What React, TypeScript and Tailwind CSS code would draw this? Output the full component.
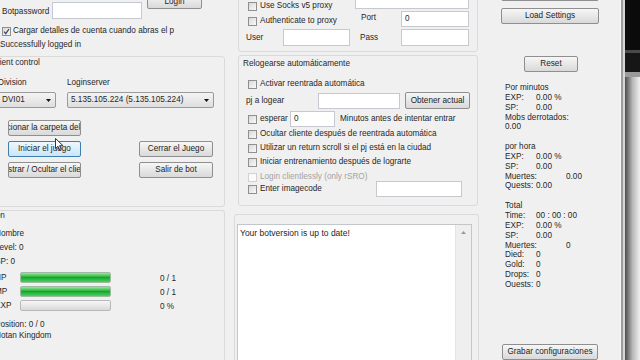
import type { ReactNode } from 'react';

type BoxProps = { className?: string; children?: ReactNode };

function Btn({ className = '', hover = false, children }: BoxProps & { hover?: boolean }) {
  const skin = hover
    ? 'border-[#3c7fb1] bg-gradient-to-b from-[#eef7fd] to-[#c9e6f8]'
    : 'border-[#8f8f8f] bg-gradient-to-b from-[#f6f6f6] to-[#d9d9d9]';
  return (
    <div
      className={`flex shrink-0 items-center justify-center overflow-hidden whitespace-nowrap rounded-[2px] border text-[#1d1d1d] ${skin} ${className}`}
    >
      {children}
    </div>
  );
}

function Field({ className = '', children }: BoxProps) {
  return (
    <div className={`flex shrink-0 items-center border border-[#c6cad0] bg-white pl-[3px] ${className}`}>
      {children}
    </div>
  );
}

function Combo({ className = '', children }: BoxProps) {
  return (
    <div
      className={`relative flex h-[16px] shrink-0 items-center rounded-[2px] border border-[#9a9a9a] bg-gradient-to-b from-[#f4f4f4] to-[#dedede] pl-[3px] whitespace-nowrap ${className}`}
    >
      {children}
      {/* dropdown arrow */}
      <svg className="absolute right-[4px] top-[6px]" width="5" height="3" viewBox="0 0 5 3">
        <path d="M0 0H5L2.5 3Z" fill="#111" />
      </svg>
    </div>
  );
}

function Check({ checked = false, disabled = false }: { checked?: boolean; disabled?: boolean }) {
  return (
    <span
      className={`relative block h-[9px] w-[9px] shrink-0 border ${
        disabled ? 'border-[#d2d2d2] bg-[#fbfbfb]' : 'border-[#8e8f8f] bg-gradient-to-br from-[#d9d9d9] to-[#f9f9f9]'
      }`}
    >
      {checked && (
        <svg className="absolute left-0 top-0" width="7" height="7" viewBox="0 0 7 7">
          <path d="M1 3.6L2.8 5.6L6 1" fill="none" stroke="#3b4a63" strokeWidth="1.3" />
        </svg>
      )}
    </span>
  );
}

function Cursor() {
  return (
    <svg className="absolute left-[47px] top-[-3px]" width="9" height="13" viewBox="0 0 9 13">
      <path d="M0.5 0.5V10.5L3 8.3L4.8 12.2L6.3 11.5L4.6 7.7H8Z" fill="#fff" stroke="#222" strokeWidth="0.9" />
    </svg>
  );
}

function LeftColumn() {
  return (
    <div className="flex w-[232px] shrink-0 flex-col">
      <div className="flex h-[21px] shrink-0 items-start">
        <span className="w-[52px] shrink-0 pl-[2px] pt-[7px]">Botpassword</span>
        <Field className="mt-[2px] h-[17px] w-[90px]" />
        <Btn className="ml-[5px] mt-[-6px] h-[15px] w-[55px]">Login</Btn>
      </div>
      <div className="mt-[5px] flex h-[10px] shrink-0 items-center gap-[2px] pl-[2px]">
        <Check checked />
        <span className="whitespace-nowrap">Cargar detalles de cuenta cuando abras el p</span>
      </div>
      <div className="mt-[4px] h-[10px] shrink-0 whitespace-nowrap">Successfully logged in</div>

      {/* Client control */}
      <div className="-ml-[12px] mt-[6px] flex h-[151px] w-[237px] shrink-0 flex-col rounded-[3px] border border-[#dadada]">
        <div className="mt-[1px] h-[10px] pl-[3px] whitespace-nowrap">Client control</div>
        <div className="flex flex-col pl-[9px]">
          <div className="mt-[10px] flex h-[10px]">
            <span className="w-[69px] shrink-0">Division</span>
            <span>Loginserver</span>
          </div>
          <div className="mt-[4px] flex">
            <Combo className="w-[58px]">DVI01</Combo>
            <Combo className="ml-[11px] w-[147px]">5.135.105.224 (5.135.105.224)</Combo>
          </div>
          <div className="mt-[12px] flex">
            <div className="ml-[10px] flex w-[73px] flex-col gap-[5px]">
              <Btn className="h-[16px]">Seleccionar la carpeta del juego</Btn>
              <div className="relative">
                <Btn hover className="h-[16px]">Iniciar el juego</Btn>
                <Cursor />
              </div>
              <Btn className="h-[16px]">Mostrar / Ocultar el cliente</Btn>
            </div>
            <div className="ml-[58px] flex w-[74px] flex-col gap-[5px] pt-[21px]">
              <Btn className="h-[16px]">Cerrar el Juego</Btn>
              <Btn className="h-[16px]">Salir de bot</Btn>
            </div>
          </div>
        </div>
      </div>

      {/* Character info */}
      <div className="-ml-[12px] mt-[3px] flex h-[160px] w-[237px] shrink-0 flex-col rounded-t-[3px] border border-b-0 border-[#dadada] pl-[6px]">
        <div className="-ml-[33px] h-[10px] whitespace-nowrap">Información</div>
        <div className="mt-[8px] h-[10px]">Nombre</div>
        <div className="mt-[4px] h-[10px]">Level: 0</div>
        <div className="mt-[4px] h-[10px]">SP: 0</div>
        <StatBar label="HP" value="0 / 1" full className="mt-[5px]" />
        <StatBar label="MP" value="0 / 1" full className="mt-[3px]" />
        <StatBar label="EXP" value="0 %" className="mt-[3px]" />
        <div className="mt-[9px] h-[10px] whitespace-nowrap">Position: 0 / 0</div>
        <div className="mt-[1px] h-[10px] whitespace-nowrap">Hotan Kingdom</div>
      </div>
    </div>
  );
}

function StatBar({ label, value, full = false, className = '' }: { label: string; value: string; full?: boolean; className?: string }) {
  return (
    <div className={`flex h-[11px] shrink-0 items-center ${className}`}>
      <span className="w-[25px] shrink-0">{label}</span>
      <div
        className={`h-[11px] w-[91px] shrink-0 rounded-[2px] border ${
          full
            ? 'border-[#9fb9a3] bg-gradient-to-b from-[#8ded9d] via-[#10a82a] to-[#47d25e]'
            : 'border-[#b9b9b9] bg-gradient-to-b from-[#f7f7f7] to-[#d9d9d9]'
        }`}
      />
      <span className="ml-[49px] pt-[3px] whitespace-nowrap">{value}</span>
    </div>
  );
}

function CheckRow({ children, disabled = false, checked = false, className = '' }: BoxProps & { disabled?: boolean; checked?: boolean }) {
  return (
    <div className={`flex h-[10px] shrink-0 items-center gap-[3px] pl-[9px] whitespace-nowrap ${disabled ? 'text-[#a3a3a3]' : ''} ${className}`}>
      <Check disabled={disabled} checked={checked} />
      <span>{children}</span>
    </div>
  );
}

function MiddleColumn() {
  return (
    <div className="flex w-[258px] shrink-0 flex-col">
      {/* Proxy */}
      <div className="ml-[6px] mt-[-10px] flex h-[62px] w-[240px] shrink-0 flex-col rounded-[3px] border border-[#dadada]">
        <div className="flex h-[18px] shrink-0 items-start">
          <div className="mt-[10px] w-[116px] shrink-0">
            <CheckRow>Use Socks v5 proxy</CheckRow>
          </div>
          <Field className="mt-[1px] h-[17px] w-[114px]" />
        </div>
        <div className="mt-[2px] flex h-[16px] shrink-0 items-start">
          <div className="mt-[5px] w-[116px] shrink-0">
            <CheckRow>Authenticate to proxy</CheckRow>
          </div>
          <span className="ml-[6px] mt-[2px] w-[40px] shrink-0">Port</span>
          <Field className="h-[16px] w-[68px]">0</Field>
        </div>
        <div className="mt-[2px] flex h-[17px] shrink-0 items-center">
          <span className="w-[44px] shrink-0 pl-[7px]">User</span>
          <Field className="h-[17px] w-[67px]" />
          <span className="ml-[10px] w-[41px] shrink-0">Pass</span>
          <Field className="h-[17px] w-[68px]" />
        </div>
      </div>

      {/* Relogearse automáticamente */}
      <div className="ml-[6px] mt-[3px] flex h-[151px] w-[240px] shrink-0 flex-col rounded-[3px] border border-[#dadada]">
        <div className="mt-[3px] h-[10px] pl-[4px] whitespace-nowrap">Relogearse automáticamente</div>
        <CheckRow className="mt-[10px]">Activar reentrada automática</CheckRow>
        <div className="mt-[3px] flex h-[17px] shrink-0 items-start">
          <span className="mt-[4px] w-[79px] shrink-0 pl-[7px]">pj a logear</span>
          <Field className="mt-[1px] h-[16px] w-[82px]" />
          <Btn className="ml-[5px] h-[17px] w-[65px]">Obtener actual</Btn>
        </div>
        <div className="mt-[2px] flex h-[16px] shrink-0 items-center">
          <div className="w-[51px] shrink-0">
            <CheckRow>esperar</CheckRow>
          </div>
          <Field className="h-[16px] w-[45px]">0</Field>
          <span className="ml-[5px] whitespace-nowrap">Minutos antes de intentar entrar</span>
        </div>
        <CheckRow className="mt-[2px]">Ocultar cliente después de reentrada automática</CheckRow>
        <CheckRow className="mt-[4px]">Utilizar un return scroll si el pj está en la ciudad</CheckRow>
        <CheckRow className="mt-[4px]">Iniciar entrenamiento después de lograrte</CheckRow>
        <CheckRow disabled className="mt-[5px]">Login clientlessly (only rSRO)</CheckRow>
        <div className="-mt-[1px] flex h-[16px] shrink-0 items-center">
          <div className="w-[137px] shrink-0">
            <CheckRow>Enter imagecode</CheckRow>
          </div>
          <Field className="h-[16px] w-[86px]" />
        </div>
      </div>

      {/* Log */}
      <div className="ml-[2px] mt-[8px] flex w-[245px] flex-1 flex-col rounded-t-[3px] border border-b-0 border-[#dadada]">
        <div className="ml-[2px] mt-[9px] flex w-[235px] flex-1 border border-b-0 border-[#c3c6cb] bg-white">
          <div className="flex-1 pl-[2px] pt-[3px] text-[8.5px] text-[#1e1e1e]">Your botversion is up to date!</div>
          <div className="flex w-[16px] shrink-0 justify-center border-l border-[#e4e4e4] bg-[#efefef] pt-[6px]">
            <svg width="5" height="3" viewBox="0 0 5 3">
              <path d="M0 3H5L2.5 0Z" fill="#9a9a9a" />
            </svg>
          </div>
        </div>
      </div>
    </div>
  );
}

function Stat({ label, value, wide = false }: { label: string; value?: string; wide?: boolean }) {
  return (
    <div className="flex h-[9.85px] whitespace-nowrap">
      <span className={wide ? 'w-[61px] shrink-0' : 'w-[31px] shrink-0'}>{label}</span>
      {value && <span>{value}</span>}
    </div>
  );
}

function RightColumn() {
  return (
    <div className="flex w-[130px] shrink-0 flex-col">
      <Btn className="ml-[11px] mt-[-16px] h-[17px] w-[98px]" />
      <Btn className="ml-[11px] mt-[7px] h-[16px] w-[98px]">Load Settings</Btn>
      <Btn className="ml-[34px] mt-[32px] h-[16px] w-[54px]">Reset</Btn>
      <div className="mt-[11px] flex flex-col pl-[15px] leading-[9.85px]">
        <Stat label="Por minutos" />
        <Stat label="EXP:" value="0.00 %" />
        <Stat label="SP:" value="0.00" />
        <Stat label="Mobs derrotados:" />
        <Stat label="0.00" />
        <div className="h-[9.85px]" />
        <Stat label="por hora" />
        <Stat label="EXP:" value="0.00 %" />
        <Stat label="SP:" value="0.00" />
        <Stat label="Muertes:" value="0.00" wide />
        <Stat label="Quests:" value="0.00" />
        <div className="h-[9.85px]" />
        <Stat label="Total" />
        <Stat label="Time:" value="00 : 00 : 00" />
        <Stat label="EXP:" value="0.00 %" />
        <Stat label="SP:" value="0.00" />
        <Stat label="Muertes:" value="0" wide />
        <Stat label="Died:" value="0" />
        <Stat label="Gold:" value="0" />
        <Stat label="Drops:" value="0" />
        <Stat label="Ouests:" value="0" />
      </div>
      <Btn className="ml-[12px] mt-auto h-[16px] w-[96px] border-[#4a8cc4]">Grabar configuraciones</Btn>
    </div>
  );
}

function WindowEdge() {
  return (
    <div className="flex w-[20px] shrink-0">
      <div className="w-[1px] bg-[#f7f7f7]" />
      <div className="w-[2px] bg-[#9c9c9c]" />
      <div className="w-[2px] bg-[#d6d6d6]" />
      <div className="flex flex-1 flex-col">
        <div className="h-[50px] bg-[#0b0b0b]" />
        <div className="h-[3px] bg-[#4a4a4a]" />
        <div className="h-[19px] bg-[#161616]" />
        <div className="h-[5px] bg-[#9a9a9a]" />
        <div className="flex-1 bg-gradient-to-r from-[#4d4d4d] via-[#b8b8b8] to-[#f0f0f0]" />
      </div>
    </div>
  );
}

export default function App() {
  return (
    <div className="flex h-[360px] w-[640px] overflow-hidden bg-[#f0f0f0] font-['Liberation_Sans',Arial,sans-serif] text-[8.2px] leading-[10px] text-[#272727]">
      <LeftColumn />
      <MiddleColumn />
      <RightColumn />
      <WindowEdge />
    </div>
  );
}
